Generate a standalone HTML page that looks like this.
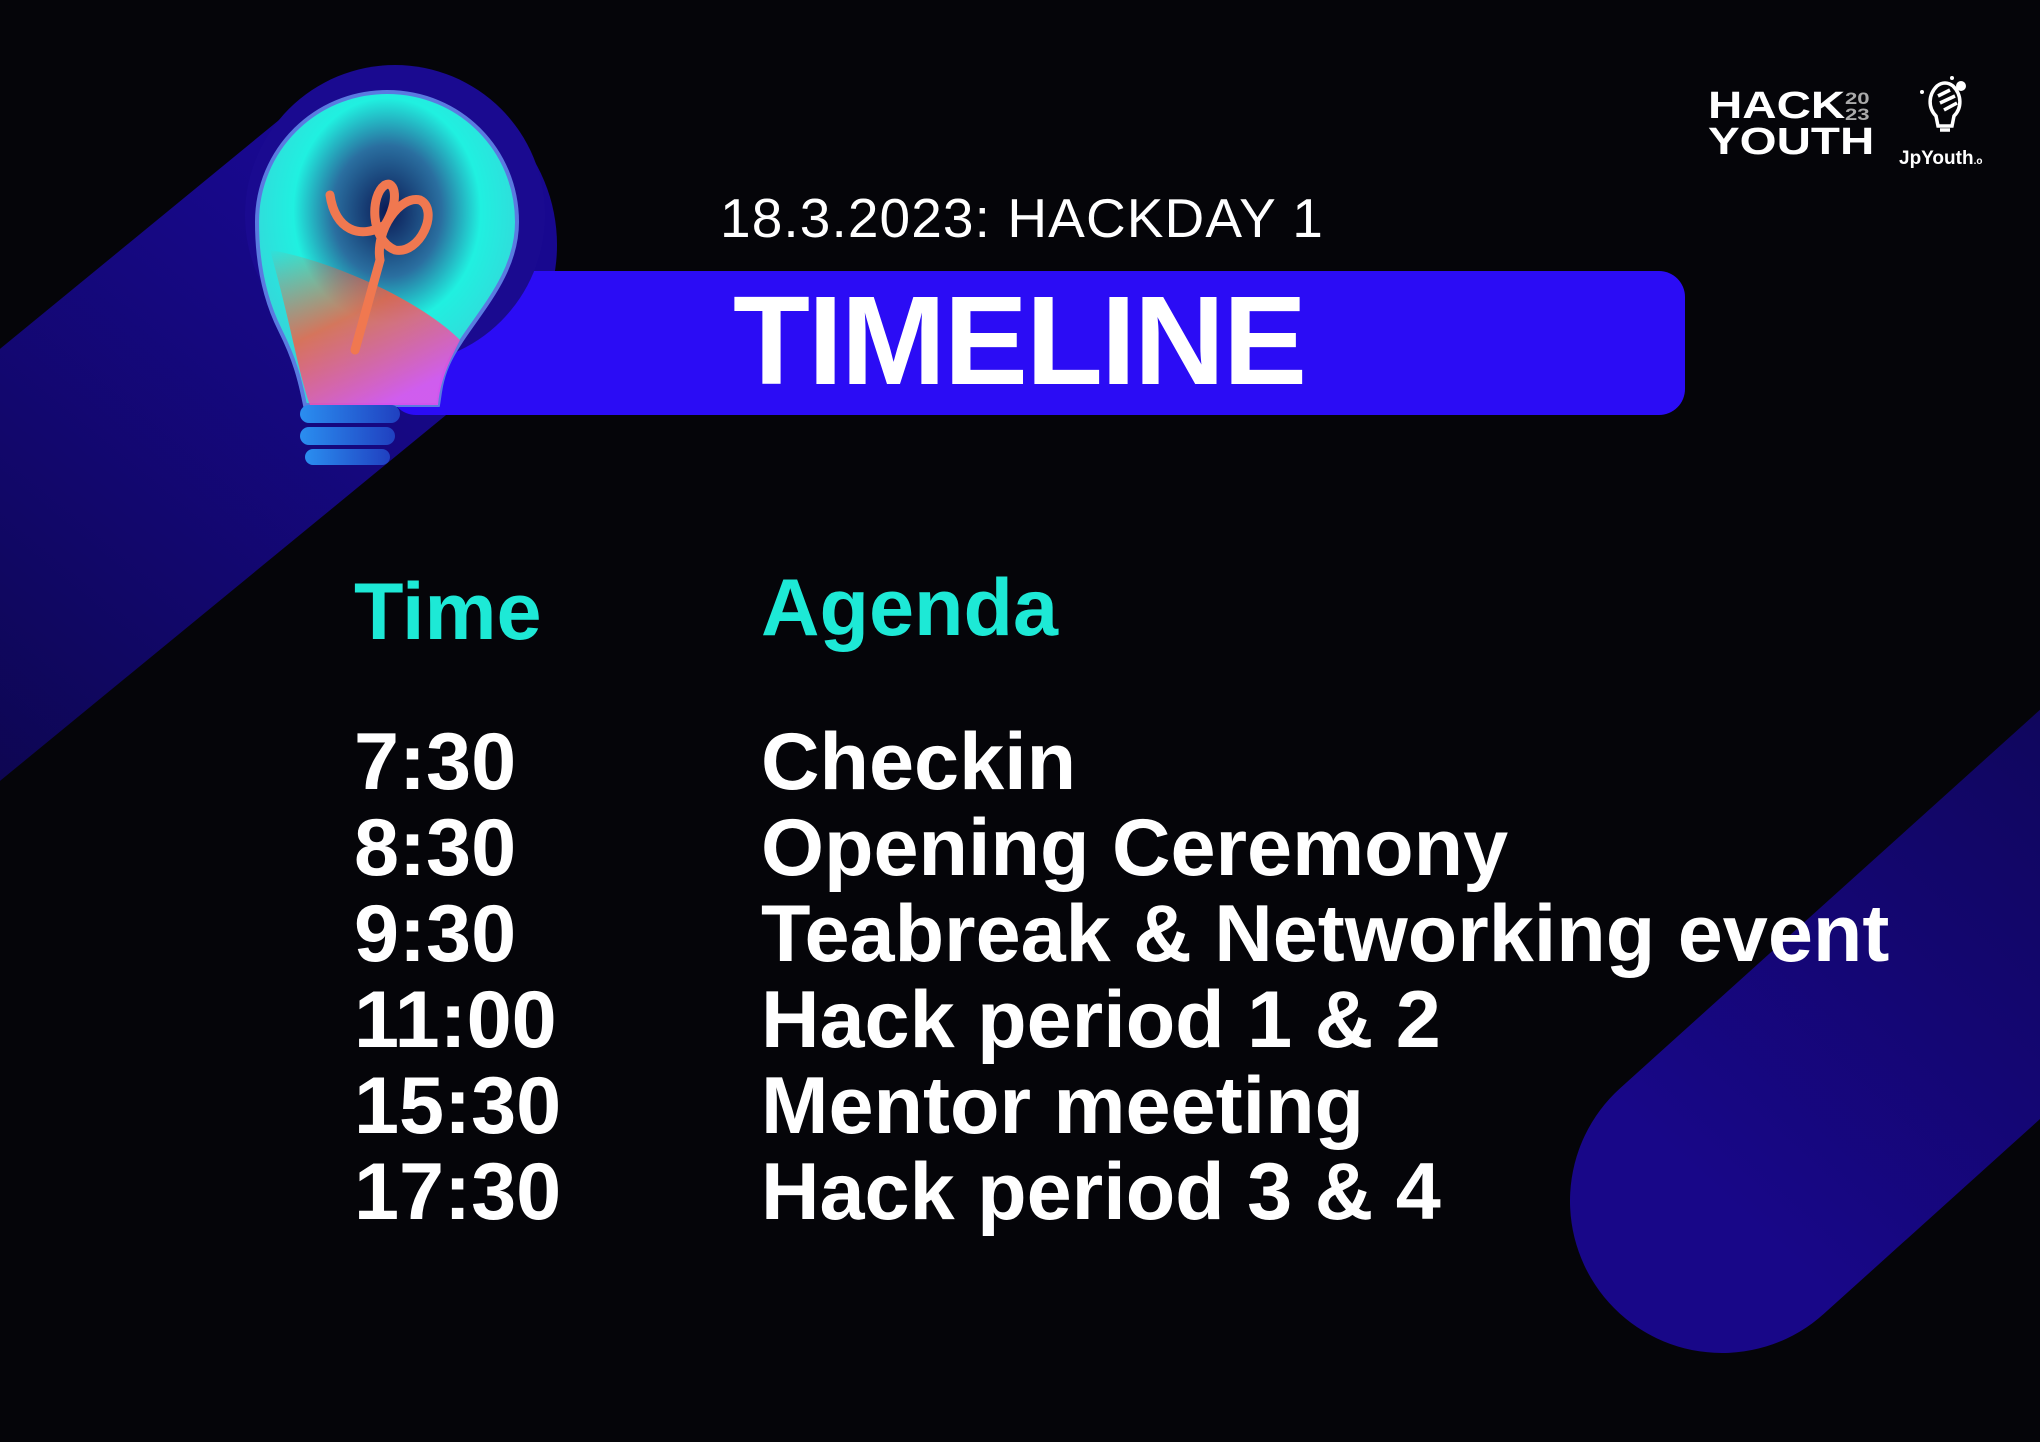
<!DOCTYPE html>
<html><head><meta charset="utf-8"><style>
html,body{margin:0;padding:0;}
body{width:2040px;height:1442px;background:#050509;position:relative;overflow:hidden;font-family:"Liberation Sans",sans-serif;color:#fff;}
.abs{position:absolute;white-space:nowrap;}
.row{font-weight:bold;font-size:81px;letter-spacing:0px;line-height:1;}
</style></head><body>
<svg class="abs" style="left:0;top:0" width="2040" height="1442">
<defs>
<linearGradient id="g1" x1="0" y1="1" x2="1" y2="0"><stop offset="0" stop-color="#0a063f"/><stop offset="1" stop-color="#18088f"/></linearGradient>
<linearGradient id="g2" x1="0" y1="1" x2="1" y2="0"><stop offset="0" stop-color="#180788"/><stop offset="1" stop-color="#0b0545"/></linearGradient>
<radialGradient id="glass" cx="0.5" cy="0.38" r="0.6"><stop offset="0" stop-color="#0a1a55"/><stop offset="0.35" stop-color="#2a6fa0"/><stop offset="0.6" stop-color="#20f0e0"/><stop offset="1" stop-color="#3ad0d8"/></radialGradient>
<linearGradient id="warm" x1="0" y1="0" x2="0.6" y2="1"><stop offset="0" stop-color="#ff6030" stop-opacity="0"/><stop offset="0.5" stop-color="#ff5a3c" stop-opacity="0.8"/><stop offset="1" stop-color="#e050f0" stop-opacity="0.9"/></linearGradient>
<linearGradient id="base" x1="0" y1="0" x2="1" y2="0"><stop offset="0" stop-color="#2a8ef0"/><stop offset="1" stop-color="#2040c0"/></linearGradient>
</defs>
<line x1="-300" y1="811" x2="390" y2="245" stroke="url(#g1)" stroke-width="334" stroke-linecap="round"/>
<line x1="1722" y1="1201" x2="2400" y2="590" stroke="url(#g2)" stroke-width="304" stroke-linecap="round"/>
<rect x="390" y="271" width="1295" height="144" rx="26" fill="#2b0cf5"/>
<circle cx="395" cy="215" r="150" fill="#1a0a90"/>
<path d="M387 92 C460 92 517 150 517 222 C517 280 470 320 450 360 C440 380 440 395 438 405 L305 405 C300 380 295 360 280 330 C265 300 257 265 257 222 C257 150 315 92 387 92 Z" fill="url(#glass)" stroke="#5a7ae0" stroke-width="4"/>
<path d="M270 250 C290 320 300 380 310 405 L438 405 C440 380 450 360 460 340 C420 300 330 260 270 250 Z" fill="url(#warm)"/>
<path d="M330 195 C335 230 360 240 385 225 C400 200 395 180 385 185 C370 195 370 240 395 250 C420 255 440 210 420 200 C400 195 375 230 380 260 L355 350" fill="none" stroke="#f07850" stroke-width="9" stroke-linecap="round"/>
<rect x="300" y="405" width="100" height="18" rx="9" fill="url(#base)"/>
<rect x="300" y="427" width="95" height="18" rx="9" fill="url(#base)"/>
<rect x="305" y="449" width="85" height="16" rx="8" fill="url(#base)"/>
<g fill="none" stroke="#fff" stroke-width="3.5">
<path d="M1937 86 C1928 95 1928 108 1936 116 L1938 126 L1952 126 L1954 116 C1962 108 1962 95 1953 86 C1948 82 1942 82 1937 86 Z"/>
<path d="M1940 130 L1950 130"/>
<path d="M1938 96 L1950 90 M1940 103 L1955 96 M1944 110 L1957 103"/>
</g>
<circle cx="1961" cy="86" r="5" fill="#fff"/><circle cx="1952" cy="78" r="2" fill="#fff"/><circle cx="1922" cy="92" r="2" fill="#fff"/>
</svg>
<div class="abs" style="left:720px;top:186px;font-size:55px;letter-spacing:1.1px">18.3.2023: HACKDAY 1</div>
<div class="abs" style="left:733px;top:268px;font-size:126px;font-weight:bold;letter-spacing:-2px">TIMELINE</div>
<div class="abs" style="left:1708px;top:88px;font-size:38px;font-weight:bold;line-height:36px;transform:scaleX(1.25);transform-origin:0 0">HACK<br>YOUTH</div>
<div class="abs" style="left:1845px;top:91px;font-size:17px;line-height:16px;color:#aaa;font-weight:bold;transform:scaleX(1.3);transform-origin:0 0">20<br>23</div>
<div class="abs" style="left:1899px;top:148px;font-size:19px;font-weight:bold">JpYouth<span style="font-size:10px">.o</span></div>
<div class="abs row" style="left:354px;top:572px;color:#1de9d6">Time</div>
<div class="abs row" style="left:761px;top:568px;color:#1de9d6">Agenda</div>
<div class="abs row" style="left:354px;top:719px;line-height:86px">7:30<br>8:30<br>9:30<br>11:00<br>15:30<br>17:30</div>
<div class="abs row" style="left:761px;top:719px;line-height:86px">Checkin<br>Opening Ceremony<br>Teabreak &amp; Networking event<br>Hack period 1 &amp; 2<br>Mentor meeting<br>Hack period 3 &amp; 4</div>
</body></html>
